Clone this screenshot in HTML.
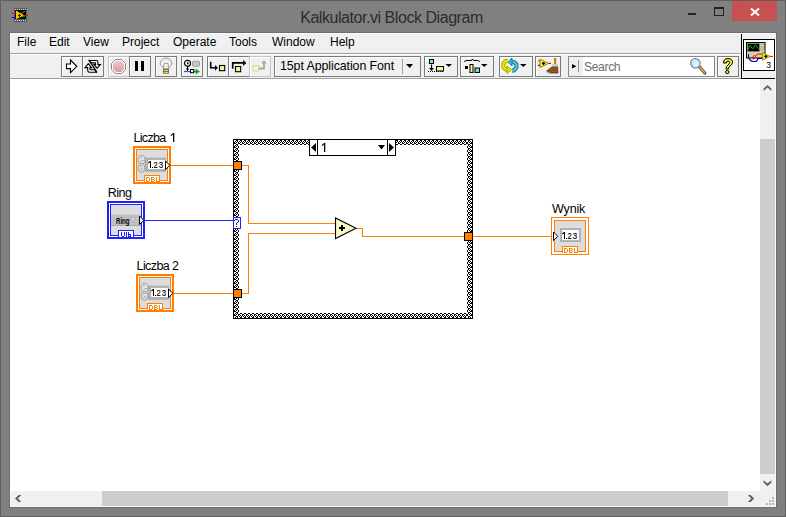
<!DOCTYPE html>
<html><head><meta charset="utf-8">
<style>
*{margin:0;padding:0;box-sizing:border-box}
html,body{width:786px;height:517px;overflow:hidden}
body{background:#808080;position:relative;font-family:"Liberation Sans",sans-serif}
.a{position:absolute}
#frame{left:0;top:0;width:786px;height:517px;border:1px solid #5f5f5f}
#title{left:-1.5px;top:8.5px;width:786px;text-align:center;font-size:16px;letter-spacing:-0.45px;color:#2c2c2c;padding-left:0}
#client{left:10px;top:33px;width:766px;height:474px;background:#f0f0f0}
.menu{top:35px;font-size:12px;color:#000}
.sep{background:#a0a0a0}
.tb{top:56px;height:21px;border:1px solid #a0a0a0;background:#f0f0f0}
.tbd{border-color:#d4d4d4}
#canvas{left:10px;top:79px;width:750px;height:412px;background:#fff}
#vsb{left:760px;top:79px;width:16px;height:412px;background:#f0f0f0}
#hsb{left:10px;top:491px;width:750px;height:16px;background:#f0f0f0}
.thumb{background:#cdcdcd}
.btn{top:56px;height:21px;border:1px solid #7a7a7a;box-shadow:inset 1px 1px 0 #fff}
.tbd{border-color:#c4c4c4}
.tbtext{font-size:13px;color:#000;white-space:nowrap}
.lbl{font-size:12.5px;color:#000;white-space:nowrap}
</style></head><body>
<div class="a" id="frame"></div>
<!-- title icon -->
<svg class="a" style="left:11px;top:7px" width="18" height="16" viewBox="0 0 18 16" shape-rendering="crispEdges">
<rect x="3" y="1" width="13" height="14" fill="#5a5a5a"/>
<g fill="#d8d8d8"><rect x="4" y="2" width="1" height="1"/><rect x="6" y="2" width="1" height="1"/><rect x="8" y="2" width="1" height="1"/><rect x="10" y="2" width="1" height="1"/><rect x="12" y="2" width="1" height="1"/><rect x="14" y="2" width="1" height="1"/>
<rect x="4" y="13" width="1" height="1"/><rect x="6" y="13" width="1" height="1"/><rect x="8" y="13" width="1" height="1"/><rect x="10" y="13" width="1" height="1"/><rect x="12" y="13" width="1" height="1"/><rect x="14" y="13" width="1" height="1"/></g>
<rect x="4" y="3" width="11" height="9" fill="#000"/>
<path d="M10 10 Q11 4 12 5 Q13 6 14 4" fill="none" stroke="#10c010" stroke-width="1" shape-rendering="auto"/>
<path d="M10 8 Q12 11 14 9" fill="none" stroke="#10a010" stroke-width="1" shape-rendering="auto"/>
<polygon points="5,3.5 13.2,8.3 5,12.2" fill="#f4c800" shape-rendering="auto"/>
<path d="M6.8 8.3 H9.8 M8.3 6.8 V9.8" stroke="#302000" stroke-width="1.2"/>
<rect x="1" y="6" width="4" height="1" fill="#f00"/>
<rect x="1" y="10" width="4" height="1" fill="#00f"/>
<rect x="13" y="8" width="4" height="1" fill="#f00"/>
</svg>
<div class="a" id="title">Kalkulator.vi Block Diagram</div>
<!-- window buttons -->
<div class="a" style="left:688px;top:13px;width:8px;height:2px;background:#222"></div>
<div class="a" style="left:714px;top:7px;width:10px;height:9px;border:1px solid #222;border-top-width:2px"></div>
<div class="a" style="left:732px;top:1px;width:45px;height:20px;background:#c75050"></div>
<svg class="a" style="left:749px;top:7px" width="12" height="10" viewBox="0 0 12 10"><path d="M2 1.5 L10 8.5 M10 1.5 L2 8.5" stroke="#fff" stroke-width="1.9"/></svg>

<div class="a" id="client"></div>
<!-- menu -->
<div class="a menu" style="left:17px">File</div>
<div class="a menu" style="left:49px">Edit</div>
<div class="a menu" style="left:83px">View</div>
<div class="a menu" style="left:122px">Project</div>
<div class="a menu" style="left:173px">Operate</div>
<div class="a menu" style="left:229px">Tools</div>
<div class="a menu" style="left:272px">Window</div>
<div class="a menu" style="left:330px">Help</div>
<div class="a sep" style="left:10px;top:53px;width:731px;height:1px"></div>
<div class="a sep" style="left:10px;top:78px;width:731px;height:1px"></div>


<!-- toolbar -->
<div class="a" style="left:10px;top:54px;width:731px;height:1px;background:#fff"></div>
<div class="a btn" style="left:61px;width:22px"></div>
<div class="a btn" style="left:82px;width:22px"></div>
<svg class="a" style="left:65px;top:59px" width="14" height="16" viewBox="0 0 14 16"><path d="M1.5 5 H5.5 V1 L11.8 7.3 L5.5 13.6 V9.6 H1.5 Z" fill="#fff" stroke="#000" stroke-width="1.1"/></svg>
<svg class="a" style="left:83px;top:58px" width="19" height="17" viewBox="0 0 19 17"><g stroke="#000" stroke-width="1.1" stroke-linejoin="miter" fill="#fff"><path d="M6.3 2.5 H13.2 Q14.9 2.5 14.9 4.2 V6.6 H17.4 L14.1 10.2 L10.9 6.6 H12.6 V5.4 Q12.6 4.9 12.1 4.9 H8 Z"/><path d="M13.3 14.2 H6.4 Q4.7 14.2 4.7 12.5 V9.6 H2 L5.3 5.6 L8.5 9.6 H7 V11.4 Q7 11.8 7.4 11.8 H11.8 Z"/></g><path d="M5.8 1.9 L13.9 14.3" stroke="#000" stroke-width="1.3"/></svg>
<div class="a btn tbd" style="left:108px;width:22px"></div>
<div class="a btn" style="left:129px;width:22px"></div>
<svg class="a" style="left:110px;top:58px" width="17" height="17" viewBox="0 0 17 17"><defs><linearGradient id="gp" x1="0" y1="0" x2="0" y2="1"><stop offset="0" stop-color="#f2c8c8"/><stop offset="1" stop-color="#d99a9a"/></linearGradient></defs><polygon points="5.5,1.5 11.5,1.5 15.5,5.5 15.5,11.5 11.5,15.5 5.5,15.5 1.5,11.5 1.5,5.5" fill="#fff" stroke="#8a8a8a" stroke-width="1"/><polygon points="6,3 11,3 14,6 14,11 11,14 6,14 3,11 3,6" fill="url(#gp)"/></svg>
<div class="a" style="left:135px;top:61px;width:3px;height:10px;background:#000"></div>
<div class="a" style="left:141px;top:61px;width:3px;height:10px;background:#000"></div>
<div class="a btn" style="left:155px;width:22px"></div>
<svg class="a" style="left:158px;top:57px" width="16" height="18" viewBox="0 0 16 18"><path d="M5.5 11.8 Q5.3 10.2 3.8 9 Q2.2 7.9 2.2 6.8 A5.8 5.8 0 0 1 13.8 6.8 Q13.8 7.9 12.2 9 Q10.7 10.2 10.5 11.8 Z" fill="#f6f6f6" stroke="#8a8a8a" stroke-width="0.9"/><path d="M4.3 5.2 A4 4 0 0 1 11.7 5.2" fill="none" stroke="#d8d8d8" stroke-width="0.8"/><path d="M5.8 11.6 V7.4 Q5.8 6.3 6.9 6.3 H9.1 Q10.2 6.3 10.2 7.4 V11.6" fill="none" stroke="#8a8a8a" stroke-width="0.9"/><rect x="5" y="12" width="5.8" height="4.6" fill="#4a4a4a"/><rect x="5.6" y="12.7" width="4.6" height="1.3" fill="#f0d040"/><rect x="5.6" y="14.7" width="4.6" height="1.3" fill="#f0d040"/></svg>
<div class="a btn" style="left:181px;width:22px"></div>
<svg class="a" style="left:183px;top:58px" width="18" height="17" viewBox="0 0 18 17"><circle cx="4.5" cy="5.3" r="3" fill="#fff" stroke="#000" stroke-width="1.2"/><path d="M4 3.8 L6 5.3 L4 6.8 Z" fill="#000"/><line x1="4.5" y1="8.3" x2="4.5" y2="13" stroke="#000" stroke-width="1"/><line x1="3" y1="11" x2="6" y2="11" stroke="#000" stroke-width="1"/><rect x="9.5" y="3.3" width="7" height="5" rx="1" fill="#c8c8c8" stroke="#8a8a8a" stroke-width="0.8"/><line x1="1" y1="13.5" x2="13" y2="13.5" stroke="#1a5aff" stroke-width="1.2"/><rect x="7.5" y="11.5" width="3.2" height="3.2" fill="#fff" stroke="#000" stroke-width="1"/><path d="M12.5 10.5 L17 13.5 L12.5 16.5 Z" fill="#10b010"/></svg>
<div class="a btn" style="left:207px;width:22px"></div>
<div class="a btn" style="left:228px;width:22px"></div>
<div class="a btn tbd" style="left:249px;width:22px"></div>
<svg class="a" style="left:209px;top:59px" width="18" height="14" viewBox="0 0 18 14"><path d="M1.7 2.8 V8.8 H6.5" fill="none" stroke="#000" stroke-width="1.6"/><path d="M6 5.9 L8.9 8.8 L6 11.7 Z" fill="#000"/><rect x="10.5" y="6.5" width="5.2" height="5.2" fill="#f8f490" stroke="#000" stroke-width="1.1"/></svg>
<svg class="a" style="left:230px;top:58px" width="18" height="16" viewBox="0 0 18 16"><path d="M2.7 10.8 V4.9 H13.5" fill="none" stroke="#000" stroke-width="1.6"/><path d="M13 1.9 L16.4 4.9 L13 7.9 Z" fill="#000"/><rect x="5.5" y="8.5" width="5.2" height="5.2" fill="#f8f490" stroke="#000" stroke-width="1.1"/></svg>
<svg class="a" style="left:251px;top:58px" width="18" height="16" viewBox="0 0 18 16"><rect x="2" y="7.5" width="5.5" height="5.5" fill="#f6f4d0" stroke="#d8d4a8" stroke-width="1"/><path d="M8 10.5 H13 V5" fill="none" stroke="#a8a8a8" stroke-width="1.8"/><path d="M10.3 5.5 L13 2 L15.7 5.5 Z" fill="#a8a8a8"/></svg>
<!-- font box -->
<div class="a btn" style="left:274px;width:147px"></div>
<div class="a" style="left:402px;top:59px;width:1px;height:15px;background:#a0a0a0"></div>
<svg class="a" style="left:406px;top:64px" width="7" height="4" viewBox="0 0 7 4"><path d="M0 0 H7 L3.8 4 Z" fill="#000"/></svg>
<div class="a tbtext" style="left:280px;top:59px;font-size:12.4px;letter-spacing:-0.08px">15pt Application Font</div>
<!-- align etc -->
<div class="a btn" style="left:424px;width:34px"></div>
<svg class="a" style="left:427px;top:57px" width="28" height="18" viewBox="0 0 28 18"><rect x="2.5" y="2.5" width="4" height="4" fill="#70d8f0" stroke="#000" stroke-width="1"/><line x1="4.5" y1="7.5" x2="4.5" y2="13" stroke="#000" stroke-width="1.2"/><path d="M2 11 L4.5 14 L7 11 Z" fill="#000"/><path d="M1 14.5 H17" stroke="#000" stroke-width="1" stroke-dasharray="1 1"/><rect x="9.5" y="9.5" width="7" height="4.5" fill="#f8f490" stroke="#000" stroke-width="1"/><path d="M18.5 7 H25 L21.75 10 Z" fill="#000"/></svg>
<div class="a btn" style="left:460px;width:34px"></div>
<svg class="a" style="left:463px;top:57px" width="28" height="18" viewBox="0 0 28 18"><path d="M1.5 5 Q1.5 3.5 4 3.5 H8 Q9 3.5 9.5 2 Q10 3.5 11 3.5 H14.5 Q16.5 3.5 16.5 5" fill="none" stroke="#000" stroke-width="1"/><rect x="2" y="9" width="3" height="3" fill="#000"/><rect x="7" y="7.5" width="3" height="8" fill="#f8f490" stroke="#000" stroke-width="1"/><rect x="12" y="11" width="4.5" height="4.5" fill="#70d8f0" stroke="#000" stroke-width="1"/><path d="M18 7 H24.5 L21.25 10 Z" fill="#000"/></svg>
<div class="a btn" style="left:499px;width:34px"></div>
<svg class="a" style="left:501px;top:57px" width="30" height="18" viewBox="0 0 30 18"><g stroke-linejoin="round"><path d="M7 4 H4.5 L2.3 7 V10 L4.5 12.5 H7" fill="none" stroke="#a0a000" stroke-width="4"/><path d="M7 4 H4.5 L2.3 7 V10 L4.5 12.5 H7" fill="none" stroke="#e8e800" stroke-width="2.3"/><polygon points="6,9 10.6,12.5 6,16.5" fill="#e8e800" stroke="#a0a000" stroke-width="0.9"/><path d="M10.5 5 H13 L15.5 7.5 V10.5 L13 13.5 H11" fill="none" stroke="#00708a" stroke-width="4"/><path d="M10.5 5 H13 L15.5 7.5 V10.5 L13 13.5 H11" fill="none" stroke="#58c0dc" stroke-width="2.3"/><polygon points="11,1 7.3,5 11,9" fill="#58c0dc" stroke="#00708a" stroke-width="0.9"/></g><path d="M19 7 H25.5 L22.25 10 Z" fill="#000"/></svg>
<div class="a btn" style="left:535px;width:26px"></div>
<svg class="a" style="left:537px;top:57px" width="23" height="18" viewBox="0 0 23 18"><line x1="1" y1="4" x2="3" y2="4" stroke="#f00" stroke-width="1.2"/><line x1="1" y1="8.3" x2="3" y2="8.3" stroke="#00f" stroke-width="1.2"/><line x1="11" y1="6.4" x2="14" y2="6.4" stroke="#f00" stroke-width="1.2"/><path d="M3 2.1 L11.4 6.4 L3 10.6 Z" fill="#f8f000" stroke="#a08000" stroke-width="1"/><path d="M5 6.4 H8 M6.5 4.9 V7.9" stroke="#000" stroke-width="1.3"/><rect x="17" y="1" width="2.2" height="7" fill="#b88a10"/><rect x="15" y="7" width="6" height="2.5" fill="#c8d0c8"/><path d="M15 9.5 H21 L21.5 16 H13 L9 14 Z" fill="#7a4a10"/><path d="M12 13 L20 11 M13 15 L21 13.5" stroke="#b07030" stroke-width="0.7"/><path d="M9 14.5 L13 16.5 H21" fill="none" stroke="#a0a0a0" stroke-width="1"/></svg>
<!-- search -->
<div class="a" style="left:568px;top:56px;width:147px;height:21px;border:1px solid #8a8a8a;background:#fff"></div>
<div class="a" style="left:569px;top:57px;width:14px;height:19px;background:#f0f0f0"></div>
<div class="a" style="left:578px;top:60px;width:1px;height:12px;background:#909090"></div>
<svg class="a" style="left:572px;top:64px" width="5" height="5" viewBox="0 0 5 5"><path d="M0 0 L4.5 2.2 L0 4.4 Z" fill="#000"/></svg>
<div class="a tbtext" style="left:584px;top:60px;color:#6d6d6d;font-size:12.2px;letter-spacing:-0.4px">Search</div>
<svg class="a" style="left:688px;top:57px" width="19" height="19" viewBox="0 0 19 19"><defs><radialGradient id="lg" cx="0.6" cy="0.6" r="0.6"><stop offset="0" stop-color="#f0fcff"/><stop offset="1" stop-color="#a8d8f4"/></radialGradient></defs><line x1="11.5" y1="10" x2="16.8" y2="16" stroke="#404050" stroke-width="3.2" stroke-linecap="round"/><line x1="11.5" y1="10" x2="16.5" y2="15.7" stroke="#f0a030" stroke-width="1.8" stroke-linecap="round"/><circle cx="7.4" cy="6.3" r="4.8" fill="url(#lg)" stroke="#6a80a0" stroke-width="1.1"/><path d="M4.5 5 A3 3 0 0 1 7 3" fill="none" stroke="#fff" stroke-width="1"/></svg>
<div class="a btn" style="left:717px;width:22px"></div>
<svg class="a" style="left:720px;top:57px" width="16" height="18" viewBox="0 0 16 18"><path d="M3.5 6 Q3.5 1.5 8 1.5 Q12.5 1.5 12.5 5.5 Q12.5 7.5 10 9 Q8.5 10 8.5 12 H6 Q6 9 8 8 Q9.5 7 9.5 5.5 Q9.5 4 8 4 Q6.5 4 6.5 6 Z" fill="#f8f000" stroke="#000" stroke-width="1"/><circle cx="7.3" cy="15" r="1.7" fill="#f8f000" stroke="#000" stroke-width="1"/></svg>
<!-- icon pane -->
<div class="a" style="left:741px;top:33px;width:35px;height:46px;background:#f0f0f0;border-left:1px solid #000;border-bottom:1px solid #000"></div>
<div class="a" style="left:743px;top:39px;width:32px;height:32px;background:#fff;border:1px solid #000"></div>

<div class="a" id="canvas"></div>
<svg class="a" style="left:744px;top:40px" width="30" height="30" viewBox="0 0 30 30">
<rect x="2.5" y="2.5" width="18.5" height="15.5" fill="#d8d4a8" stroke="#000" stroke-width="1"/>
<rect x="3.5" y="3.5" width="12" height="8" fill="#000" stroke="#8a8a8a" stroke-width="0.8"/>
<path d="M4.3 9.5 Q5.5 3.5 7 6.5 Q8.5 10.5 10 7 Q11.5 3.5 12.8 6.5 Q13.6 8.5 14.8 9" fill="none" stroke="#10c010" stroke-width="1"/>
<circle cx="17.3" cy="4.5" r="0.6" fill="#888"/><circle cx="19.3" cy="4.5" r="0.6" fill="#888"/>
<circle cx="17.3" cy="6.5" r="0.6" fill="#888"/><circle cx="19.3" cy="6.5" r="0.6" fill="#888"/>
<ellipse cx="17.8" cy="9" rx="1.1" ry="1.5" fill="#f0c8a0" stroke="#8a8060" stroke-width="0.5"/>
<path d="M4.5 14 V17 Q6 21.5 9.5 21.5 H11.5 Q13 21.5 14 18.5 H18.5" fill="none" stroke="#0000a0" stroke-width="1.1"/>
<path d="M18.5 14 H14 Q12 14.5 11 17 Q9.5 20.5 8.5 18.5 Q9 16 10.5 15" fill="none" stroke="#f00000" stroke-width="1"/>
<path d="M18.5 12.5 L26 16.4 L18.5 20.3 Z" fill="#f0f000" stroke="#808000" stroke-width="0.8"/>
<path d="M20.3 16.4 H23.3 M21.8 14.9 V17.9" stroke="#000" stroke-width="1.2"/>
<line x1="26" y1="16.4" x2="29" y2="16.4" stroke="#f00" stroke-width="1"/>
<text x="22.3" y="27.5" font-family="Liberation Sans" font-size="8.5" fill="#000">3</text>
</svg>

<div class="a" id="vsb"></div>
<div class="a thumb" style="left:760px;top:139px;width:15px;height:335px"></div>
<div class="a" id="hsb"></div>
<div class="a thumb" style="left:102px;top:491px;width:626px;height:15px"></div>


<!-- diagram -->
<svg class="a" style="left:0;top:0" width="786" height="517" viewBox="0 0 786 517" shape-rendering="crispEdges">
<defs><pattern id="tx" x="0" y="0" width="2" height="2" patternUnits="userSpaceOnUse"><rect width="2" height="2" fill="#c4c4c4"/><rect x="0" y="0" width="1" height="1" fill="#969696"/><rect x="1" y="1" width="1" height="1" fill="#a8a8a8"/></pattern><pattern id="ct" x="0" y="140" width="4" height="5" patternUnits="userSpaceOnUse"><rect width="4" height="5" fill="#fff"/><rect x="0" y="0" width="1" height="1" fill="#000"/><rect x="1" y="0" width="1" height="1" fill="#000"/><rect x="1" y="1" width="1" height="1" fill="#000"/><rect x="3" y="1" width="1" height="1" fill="#000"/><rect x="0" y="2" width="1" height="1" fill="#000"/><rect x="2" y="2" width="1" height="1" fill="#000"/><rect x="2" y="3" width="1" height="1" fill="#000"/><rect x="3" y="3" width="1" height="1" fill="#000"/><rect x="0" y="4" width="1" height="1" fill="#000"/><rect x="1" y="4" width="1" height="1" fill="#000"/></pattern><pattern id="cb" x="0" y="313" width="4" height="5" patternUnits="userSpaceOnUse"><rect width="4" height="5" fill="#fff"/><rect x="0" y="0" width="1" height="1" fill="#000"/><rect x="1" y="0" width="1" height="1" fill="#000"/><rect x="2" y="1" width="1" height="1" fill="#000"/><rect x="3" y="1" width="1" height="1" fill="#000"/><rect x="0" y="2" width="1" height="1" fill="#000"/><rect x="2" y="2" width="1" height="1" fill="#000"/><rect x="1" y="3" width="1" height="1" fill="#000"/><rect x="3" y="3" width="1" height="1" fill="#000"/><rect x="0" y="4" width="1" height="1" fill="#000"/><rect x="1" y="4" width="1" height="1" fill="#000"/></pattern><pattern id="cl" x="234" y="2" width="5" height="4" patternUnits="userSpaceOnUse"><rect width="5" height="4" fill="#fff"/><rect x="0" y="0" width="1" height="1" fill="#000"/><rect x="2" y="0" width="1" height="1" fill="#000"/><rect x="4" y="0" width="1" height="1" fill="#000"/><rect x="0" y="1" width="1" height="1" fill="#000"/><rect x="1" y="1" width="1" height="1" fill="#000"/><rect x="4" y="1" width="1" height="1" fill="#000"/><rect x="2" y="2" width="1" height="1" fill="#000"/><rect x="3" y="2" width="1" height="1" fill="#000"/><rect x="1" y="3" width="1" height="1" fill="#000"/><rect x="3" y="3" width="1" height="1" fill="#000"/></pattern><pattern id="cr" x="467" y="2" width="5" height="4" patternUnits="userSpaceOnUse"><rect width="5" height="4" fill="#fff"/><rect x="0" y="0" width="1" height="1" fill="#000"/><rect x="2" y="0" width="1" height="1" fill="#000"/><rect x="4" y="0" width="1" height="1" fill="#000"/><rect x="0" y="1" width="1" height="1" fill="#000"/><rect x="3" y="1" width="1" height="1" fill="#000"/><rect x="4" y="1" width="1" height="1" fill="#000"/><rect x="1" y="2" width="1" height="1" fill="#000"/><rect x="2" y="2" width="1" height="1" fill="#000"/><rect x="1" y="3" width="1" height="1" fill="#000"/><rect x="3" y="3" width="1" height="1" fill="#000"/></pattern></defs>
<!-- case structure frame -->
<rect x="233" y="139" width="240" height="180" fill="#000"/>
<rect x="234" y="140" width="238" height="178" fill="#fff"/>
<rect x="234" y="140" width="238" height="5" fill="url(#ct)"/>
<rect x="234" y="313" width="238" height="5" fill="url(#cb)"/>
<rect x="234" y="140" width="5" height="178" fill="url(#cl)"/>
<rect x="467" y="140" width="5" height="178" fill="url(#cr)"/>
<rect x="239" y="145" width="228" height="168" fill="#fff"/>
<!-- selector -->
<rect x="309.5" y="139.5" width="86" height="16" fill="#fff" stroke="#000"/>
<line x1="317.5" y1="140" x2="317.5" y2="155" stroke="#000"/>
<line x1="387.5" y1="140" x2="387.5" y2="155" stroke="#000"/>
<polygon points="311,147.5 316,143 316,152" fill="#000" shape-rendering="auto"/>
<polygon points="394,147.5 389,143 389,152" fill="#000" shape-rendering="auto"/>
<polygon points="378,145 385,145 381.5,149.5" fill="#000" shape-rendering="auto"/>
<!-- wires -->
<g fill="none" stroke="#ff7f00" stroke-width="1">
<path d="M171 165.5 H234"/>
<path d="M241 165.5 H248.5 V223.5 H335"/>
<path d="M174 293.5 H234"/>
<path d="M241 293.5 H248.5 V233.5 H335"/>
<path d="M356 228.5 H362.5 V236.5 H465"/>
<path d="M473 236.5 H553"/>
</g>
<path d="M145 220.5 H234" stroke="#2020ff" stroke-width="1"/>
<!-- tunnels -->
<rect x="233.5" y="161.5" width="8" height="8" fill="#ff8000" stroke="#000"/>
<rect x="233.5" y="289.5" width="8" height="8" fill="#ff8000" stroke="#000"/>
<rect x="464.5" y="232.5" width="8" height="8" fill="#ff8000" stroke="#000"/>
<rect x="233.5" y="217.5" width="7" height="11" fill="#fafad0" stroke="#2020ff"/>
<rect x="235" y="219" width="1" height="1" fill="#2020ff"/><rect x="236" y="219" width="1" height="1" fill="#2020ff"/><rect x="237" y="219" width="1" height="1" fill="#2020ff"/><rect x="234" y="220" width="1" height="1" fill="#2020ff"/><rect x="238" y="220" width="1" height="1" fill="#2020ff"/><rect x="238" y="221" width="1" height="1" fill="#2020ff"/><rect x="237" y="222" width="1" height="1" fill="#2020ff"/><rect x="236" y="223" width="1" height="1" fill="#2020ff"/><rect x="236" y="224" width="1" height="1" fill="#2020ff"/><rect x="236" y="226" width="1" height="1" fill="#2020ff"/>
<g transform="translate(133,146)"><rect x="0" y="0" width="38" height="38" fill="#ff7f00"/><rect x="2" y="2" width="34" height="34" fill="#fff"/><rect x="3" y="3" width="32" height="32" fill="#ff7f00"/><rect x="4" y="4" width="30" height="30" fill="#dddddd"/><rect x="12" y="11" width="21" height="15" fill="url(#tx)"/><rect x="12" y="11" width="21" height="1" fill="#d0d0d0"/><g shape-rendering="auto"><ellipse cx="8.5" cy="13.7" rx="3.4" ry="4.4" fill="#e6e6e8" stroke="#9a9a9a" stroke-width="0.9"/><ellipse cx="8.5" cy="21.8" rx="3.4" ry="4.4" fill="#dcdcde" stroke="#9a9a9a" stroke-width="0.9"/><path d="M7 12 L9 11 M7.5 15.5 L9.5 14.5 M7 20 L9.5 19 M7.5 23.5 L9.5 22.5" stroke="#888" stroke-width="0.8"/></g><rect x="10" y="10" width="1" height="1" fill="#b0b0ff"/><rect x="10" y="14" width="1" height="1" fill="#60c8c8"/><rect x="15" y="14" width="17" height="9" fill="#fff"/><rect x="17" y="15" width="1.3" height="7" fill="#000"/><path d="M15.4 17 L17.6 15.3" stroke="#000" stroke-width="1.1" shape-rendering="auto"/><rect x="19" y="20.8" width="1.2" height="1.2" fill="#000"/><text x="20.5" y="22" font-family="Liberation Sans" font-size="9.8" fill="#000" stroke="#000" stroke-width="0.15" textLength="4.2" lengthAdjust="spacingAndGlyphs" shape-rendering="auto">2</text><text x="25.7" y="22" font-family="Liberation Sans" font-size="9.8" fill="#000" stroke="#000" stroke-width="0.15" textLength="4.4" lengthAdjust="spacingAndGlyphs" shape-rendering="auto">3</text><path d="M32.5 15 L36.8 19.3 L32.5 23.6 Z" fill="#fff" stroke="#000" stroke-width="1" shape-rendering="auto"/><rect x="11" y="29" width="16" height="7" fill="#ff7f00"/><rect x="12" y="30" width="14" height="6" fill="#fff"/><rect x="13" y="31" width="1" height="1" fill="#ff7f00"/><rect x="14" y="31" width="1" height="1" fill="#ff7f00"/><rect x="15" y="31" width="1" height="1" fill="#ff7f00"/><rect x="13" y="32" width="1" height="1" fill="#ff7f00"/><rect x="16" y="32" width="1" height="1" fill="#ff7f00"/><rect x="13" y="33" width="1" height="1" fill="#ff7f00"/><rect x="16" y="33" width="1" height="1" fill="#ff7f00"/><rect x="13" y="34" width="1" height="1" fill="#ff7f00"/><rect x="16" y="34" width="1" height="1" fill="#ff7f00"/><rect x="13" y="35" width="1" height="1" fill="#ff7f00"/><rect x="14" y="35" width="1" height="1" fill="#ff7f00"/><rect x="15" y="35" width="1" height="1" fill="#ff7f00"/><rect x="18" y="31" width="1" height="1" fill="#ff7f00"/><rect x="19" y="31" width="1" height="1" fill="#ff7f00"/><rect x="20" y="31" width="1" height="1" fill="#ff7f00"/><rect x="18" y="32" width="1" height="1" fill="#ff7f00"/><rect x="21" y="32" width="1" height="1" fill="#ff7f00"/><rect x="18" y="33" width="1" height="1" fill="#ff7f00"/><rect x="19" y="33" width="1" height="1" fill="#ff7f00"/><rect x="20" y="33" width="1" height="1" fill="#ff7f00"/><rect x="18" y="34" width="1" height="1" fill="#ff7f00"/><rect x="21" y="34" width="1" height="1" fill="#ff7f00"/><rect x="18" y="35" width="1" height="1" fill="#ff7f00"/><rect x="19" y="35" width="1" height="1" fill="#ff7f00"/><rect x="20" y="35" width="1" height="1" fill="#ff7f00"/><rect x="23" y="31" width="1" height="1" fill="#ff7f00"/><rect x="23" y="32" width="1" height="1" fill="#ff7f00"/><rect x="23" y="33" width="1" height="1" fill="#ff7f00"/><rect x="23" y="34" width="1" height="1" fill="#ff7f00"/><rect x="23" y="35" width="1" height="1" fill="#ff7f00"/><rect x="24" y="35" width="1" height="1" fill="#ff7f00"/><rect x="25" y="35" width="1" height="1" fill="#ff7f00"/></g><g transform="translate(136,274)"><rect x="0" y="0" width="38" height="38" fill="#ff7f00"/><rect x="2" y="2" width="34" height="34" fill="#fff"/><rect x="3" y="3" width="32" height="32" fill="#ff7f00"/><rect x="4" y="4" width="30" height="30" fill="#dddddd"/><rect x="12" y="11" width="21" height="15" fill="url(#tx)"/><rect x="12" y="11" width="21" height="1" fill="#d0d0d0"/><g shape-rendering="auto"><ellipse cx="8.5" cy="13.7" rx="3.4" ry="4.4" fill="#e6e6e8" stroke="#9a9a9a" stroke-width="0.9"/><ellipse cx="8.5" cy="21.8" rx="3.4" ry="4.4" fill="#dcdcde" stroke="#9a9a9a" stroke-width="0.9"/><path d="M7 12 L9 11 M7.5 15.5 L9.5 14.5 M7 20 L9.5 19 M7.5 23.5 L9.5 22.5" stroke="#888" stroke-width="0.8"/></g><rect x="10" y="10" width="1" height="1" fill="#b0b0ff"/><rect x="10" y="14" width="1" height="1" fill="#60c8c8"/><rect x="15" y="14" width="17" height="9" fill="#fff"/><rect x="17" y="15" width="1.3" height="7" fill="#000"/><path d="M15.4 17 L17.6 15.3" stroke="#000" stroke-width="1.1" shape-rendering="auto"/><rect x="19" y="20.8" width="1.2" height="1.2" fill="#000"/><text x="20.5" y="22" font-family="Liberation Sans" font-size="9.8" fill="#000" stroke="#000" stroke-width="0.15" textLength="4.2" lengthAdjust="spacingAndGlyphs" shape-rendering="auto">2</text><text x="25.7" y="22" font-family="Liberation Sans" font-size="9.8" fill="#000" stroke="#000" stroke-width="0.15" textLength="4.4" lengthAdjust="spacingAndGlyphs" shape-rendering="auto">3</text><path d="M32.5 15 L36.8 19.3 L32.5 23.6 Z" fill="#fff" stroke="#000" stroke-width="1" shape-rendering="auto"/><rect x="11" y="29" width="16" height="7" fill="#ff7f00"/><rect x="12" y="30" width="14" height="6" fill="#fff"/><rect x="13" y="31" width="1" height="1" fill="#ff7f00"/><rect x="14" y="31" width="1" height="1" fill="#ff7f00"/><rect x="15" y="31" width="1" height="1" fill="#ff7f00"/><rect x="13" y="32" width="1" height="1" fill="#ff7f00"/><rect x="16" y="32" width="1" height="1" fill="#ff7f00"/><rect x="13" y="33" width="1" height="1" fill="#ff7f00"/><rect x="16" y="33" width="1" height="1" fill="#ff7f00"/><rect x="13" y="34" width="1" height="1" fill="#ff7f00"/><rect x="16" y="34" width="1" height="1" fill="#ff7f00"/><rect x="13" y="35" width="1" height="1" fill="#ff7f00"/><rect x="14" y="35" width="1" height="1" fill="#ff7f00"/><rect x="15" y="35" width="1" height="1" fill="#ff7f00"/><rect x="18" y="31" width="1" height="1" fill="#ff7f00"/><rect x="19" y="31" width="1" height="1" fill="#ff7f00"/><rect x="20" y="31" width="1" height="1" fill="#ff7f00"/><rect x="18" y="32" width="1" height="1" fill="#ff7f00"/><rect x="21" y="32" width="1" height="1" fill="#ff7f00"/><rect x="18" y="33" width="1" height="1" fill="#ff7f00"/><rect x="19" y="33" width="1" height="1" fill="#ff7f00"/><rect x="20" y="33" width="1" height="1" fill="#ff7f00"/><rect x="18" y="34" width="1" height="1" fill="#ff7f00"/><rect x="21" y="34" width="1" height="1" fill="#ff7f00"/><rect x="18" y="35" width="1" height="1" fill="#ff7f00"/><rect x="19" y="35" width="1" height="1" fill="#ff7f00"/><rect x="20" y="35" width="1" height="1" fill="#ff7f00"/><rect x="23" y="31" width="1" height="1" fill="#ff7f00"/><rect x="23" y="32" width="1" height="1" fill="#ff7f00"/><rect x="23" y="33" width="1" height="1" fill="#ff7f00"/><rect x="23" y="34" width="1" height="1" fill="#ff7f00"/><rect x="23" y="35" width="1" height="1" fill="#ff7f00"/><rect x="24" y="35" width="1" height="1" fill="#ff7f00"/><rect x="25" y="35" width="1" height="1" fill="#ff7f00"/></g><g transform="translate(107,201)"><rect x="0" y="0" width="38" height="38" fill="#2020ff"/><rect x="2" y="2" width="34" height="34" fill="#fff"/><rect x="3" y="3" width="32" height="32" fill="#2020ff"/><rect x="4" y="4" width="30" height="30" fill="#dddddd"/><rect x="4" y="13" width="30" height="12" fill="#c0c0c0"/><rect x="4" y="13" width="30" height="1" fill="#d4d4d4"/><rect x="4" y="24" width="30" height="1" fill="#a8a8a8"/><text x="9" y="22.6" font-family="Liberation Sans" font-weight="bold" font-size="8.5" fill="#000" textLength="13.5" lengthAdjust="spacingAndGlyphs" shape-rendering="auto">Ring</text><polygon points="23,16.5 29,16.5 26,21.5" fill="#d4d4d4" stroke="#a0a0a0" stroke-width="0.6" shape-rendering="auto"/><path d="M32.5 15 L36.8 19.3 L32.5 23.6 Z" fill="#fff" stroke="#000" stroke-width="1" shape-rendering="auto"/><rect x="11" y="29" width="16" height="7" fill="#2020ff"/><rect x="12" y="30" width="14" height="6" fill="#fff"/><rect x="14" y="31" width="1" height="1" fill="#2020ff"/><rect x="17" y="31" width="1" height="1" fill="#2020ff"/><rect x="14" y="32" width="1" height="1" fill="#2020ff"/><rect x="17" y="32" width="1" height="1" fill="#2020ff"/><rect x="14" y="33" width="1" height="1" fill="#2020ff"/><rect x="17" y="33" width="1" height="1" fill="#2020ff"/><rect x="14" y="34" width="1" height="1" fill="#2020ff"/><rect x="17" y="34" width="1" height="1" fill="#2020ff"/><rect x="15" y="35" width="1" height="1" fill="#2020ff"/><rect x="16" y="35" width="1" height="1" fill="#2020ff"/><rect x="19" y="31" width="1" height="1" fill="#2020ff"/><rect x="19" y="32" width="1" height="1" fill="#2020ff"/><rect x="19" y="33" width="1" height="1" fill="#2020ff"/><rect x="19" y="34" width="1" height="1" fill="#2020ff"/><rect x="19" y="35" width="1" height="1" fill="#2020ff"/><rect x="21" y="31" width="1" height="1" fill="#2020ff"/><rect x="21" y="32" width="1" height="1" fill="#2020ff"/><rect x="21" y="33" width="1" height="1" fill="#2020ff"/><rect x="22" y="33" width="1" height="1" fill="#2020ff"/><rect x="23" y="33" width="1" height="1" fill="#2020ff"/><rect x="21" y="34" width="1" height="1" fill="#2020ff"/><rect x="23" y="34" width="1" height="1" fill="#2020ff"/><rect x="21" y="35" width="1" height="1" fill="#2020ff"/><rect x="22" y="35" width="1" height="1" fill="#2020ff"/><rect x="23" y="35" width="1" height="1" fill="#2020ff"/></g><g transform="translate(551,217)"><rect x="0" y="0" width="38" height="38" fill="#ff7f00"/><rect x="1" y="1" width="36" height="36" fill="#fff"/><rect x="3" y="3" width="32" height="32" fill="#ff7f00"/><rect x="4" y="4" width="30" height="30" fill="#dddddd"/><rect x="9" y="11" width="21" height="14" fill="url(#tx)"/><rect x="11" y="13" width="17" height="10" fill="#fff"/><rect x="13" y="15" width="1.3" height="7" fill="#000"/><path d="M11.4 17 L13.6 15.3" stroke="#000" stroke-width="1.1" shape-rendering="auto"/><rect x="15" y="20.8" width="1.2" height="1.2" fill="#000"/><text x="16.5" y="22" font-family="Liberation Sans" font-size="9.8" fill="#000" stroke="#000" stroke-width="0.15" textLength="4.2" lengthAdjust="spacingAndGlyphs" shape-rendering="auto">2</text><text x="21.7" y="22" font-family="Liberation Sans" font-size="9.8" fill="#000" stroke="#000" stroke-width="0.15" textLength="4.4" lengthAdjust="spacingAndGlyphs" shape-rendering="auto">3</text><path d="M2.5 15 L6.8 19.3 L2.5 23.6 Z" fill="#fff" stroke="#000" stroke-width="1" shape-rendering="auto"/><rect x="11" y="29" width="16" height="7" fill="#ff7f00"/><rect x="12" y="30" width="14" height="6" fill="#fff"/><rect x="13" y="31" width="1" height="1" fill="#ff7f00"/><rect x="14" y="31" width="1" height="1" fill="#ff7f00"/><rect x="15" y="31" width="1" height="1" fill="#ff7f00"/><rect x="13" y="32" width="1" height="1" fill="#ff7f00"/><rect x="16" y="32" width="1" height="1" fill="#ff7f00"/><rect x="13" y="33" width="1" height="1" fill="#ff7f00"/><rect x="16" y="33" width="1" height="1" fill="#ff7f00"/><rect x="13" y="34" width="1" height="1" fill="#ff7f00"/><rect x="16" y="34" width="1" height="1" fill="#ff7f00"/><rect x="13" y="35" width="1" height="1" fill="#ff7f00"/><rect x="14" y="35" width="1" height="1" fill="#ff7f00"/><rect x="15" y="35" width="1" height="1" fill="#ff7f00"/><rect x="18" y="31" width="1" height="1" fill="#ff7f00"/><rect x="19" y="31" width="1" height="1" fill="#ff7f00"/><rect x="20" y="31" width="1" height="1" fill="#ff7f00"/><rect x="18" y="32" width="1" height="1" fill="#ff7f00"/><rect x="21" y="32" width="1" height="1" fill="#ff7f00"/><rect x="18" y="33" width="1" height="1" fill="#ff7f00"/><rect x="19" y="33" width="1" height="1" fill="#ff7f00"/><rect x="20" y="33" width="1" height="1" fill="#ff7f00"/><rect x="18" y="34" width="1" height="1" fill="#ff7f00"/><rect x="21" y="34" width="1" height="1" fill="#ff7f00"/><rect x="18" y="35" width="1" height="1" fill="#ff7f00"/><rect x="19" y="35" width="1" height="1" fill="#ff7f00"/><rect x="20" y="35" width="1" height="1" fill="#ff7f00"/><rect x="23" y="31" width="1" height="1" fill="#ff7f00"/><rect x="23" y="32" width="1" height="1" fill="#ff7f00"/><rect x="23" y="33" width="1" height="1" fill="#ff7f00"/><rect x="23" y="34" width="1" height="1" fill="#ff7f00"/><rect x="23" y="35" width="1" height="1" fill="#ff7f00"/><rect x="24" y="35" width="1" height="1" fill="#ff7f00"/><rect x="25" y="35" width="1" height="1" fill="#ff7f00"/></g>
<!-- add node -->
<polygon points="335.5,218 335.5,238.5 356,228.3" fill="#f8f8c4" stroke="#000" stroke-width="1.1" shape-rendering="auto"/>
<rect x="339" y="227" width="6" height="2" fill="#000"/><rect x="341" y="225" width="2" height="6" fill="#000"/>
</svg>


<div class="a lbl" style="left:133.5px;top:131px;letter-spacing:-0.7px">Liczba</div>
<svg class="a" style="left:0;top:0" width="786" height="517"><rect x="173" y="133" width="1.3" height="9" fill="#000"/><path d="M170.8 135.6 L173.8 133.2" stroke="#000" stroke-width="1.1"/><rect x="324" y="143" width="1.3" height="9" fill="#000"/><path d="M321.8 145.6 L324.8 143.2" stroke="#000" stroke-width="1.1"/></svg>
<div class="a lbl" style="left:107.7px;top:186px;letter-spacing:-0.5px">Ring</div>
<div class="a lbl" style="left:136.5px;top:259px;letter-spacing:-0.57px">Liczba 2</div>
<div class="a lbl" style="left:552px;top:202px;letter-spacing:-0.15px">Wynik</div>

<!-- scrollbar arrows -->
<svg class="a" style="left:0;top:0" width="786" height="517" viewBox="0 0 786 517"><g fill="#606060">
<polygon points="18.6,495 21.4,495 17.9,498.5 21.4,502 18.6,502 15,498.5"/>
<polygon points="750.6,495 747.8,495 751.3,498.5 747.8,502 750.6,502 754.2,498.5"/>
<polygon points="763.6,480.2 763.6,482.6 767.5,486.2 771.4,482.6 771.4,480.2 767.5,483.6"/>
<polygon points="763.6,91 763.6,88.6 767.5,85 771.4,88.6 771.4,91 767.5,87.6"/>
</g></svg>
<svg class="a" style="left:765px;top:497px" width="10" height="9" viewBox="0 0 10 9" shape-rendering="crispEdges"><rect x="7" y="0" width="2" height="2" fill="#b8b8b8"/><rect x="4" y="3" width="2" height="2" fill="#b8b8b8"/><rect x="7" y="3" width="2" height="2" fill="#b8b8b8"/><rect x="1" y="6" width="2" height="2" fill="#b8b8b8"/><rect x="4" y="6" width="2" height="2" fill="#b8b8b8"/><rect x="7" y="6" width="2" height="2" fill="#b8b8b8"/></svg>
<div class="a" style="left:9px;top:32px;width:768px;height:476px;border:1px solid #6e6e6e"></div>
<div class="a" style="left:10px;top:33px;width:766px;height:474px;border:1px solid #fafafa;border-left:0"></div>
<div class="a" style="left:10px;top:33px;width:1px;height:20px;background:#fafafa"></div>
<div class="a" style="left:10px;top:491px;width:1px;height:16px;background:#fafafa"></div>
</body></html>
